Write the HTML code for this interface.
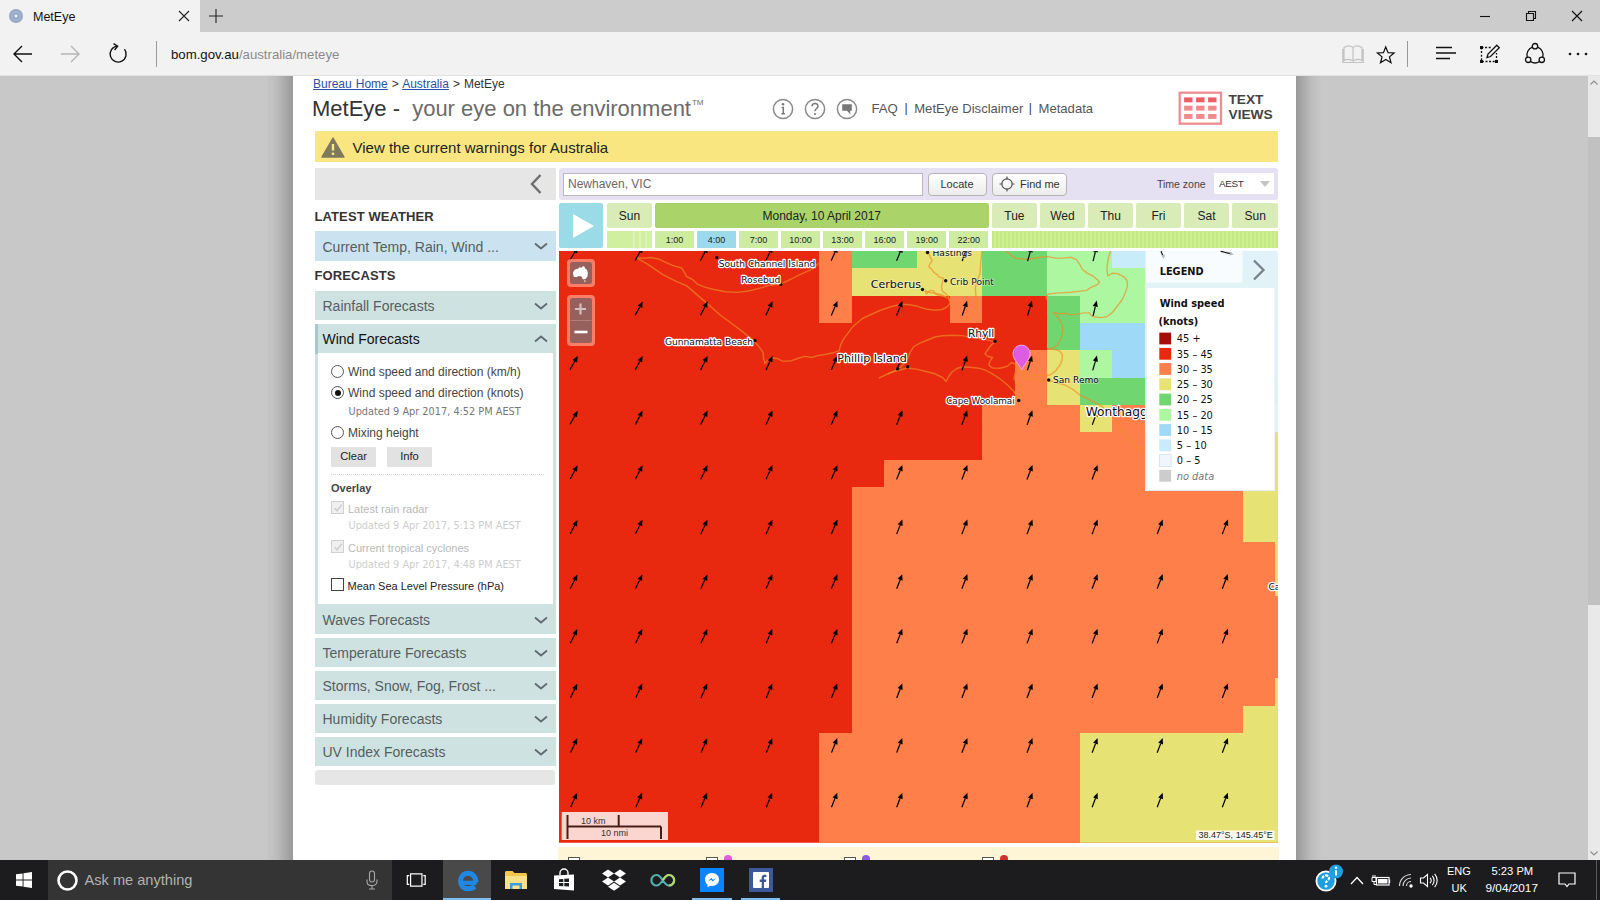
<!DOCTYPE html>
<html lang="en"><head><meta charset="utf-8"><title>MetEye</title>
<style>
*{box-sizing:border-box;margin:0;padding:0}
html,body{width:1600px;height:900px;overflow:hidden}
body{position:relative;background:#c8c8c8;font-family:"Liberation Sans",Arial,sans-serif;color:#333}
.abs{position:absolute}
.t{position:absolute;white-space:nowrap;line-height:1}
svg{position:absolute;overflow:visible}
a{color:#2a4fa5}
/* browser chrome */
#tabstrip{left:0;top:0;width:1600px;height:32px;background:#cccccc}
#tab{left:0;top:0;width:200px;height:32px;background:#f2f2f2}
#toolbar{left:0;top:32px;width:1600px;height:44px;background:#f2f2f2}
#tbline{left:0;top:75px;width:1600px;height:1px;background:#e1e1e1}
/* page */
#shadowL{left:265px;top:76px;width:28px;height:784px;background:linear-gradient(to right,#c8c8c8,#bdbdbd 40%,#999)}
#shadowR{left:1296px;top:76px;width:26px;height:784px;background:linear-gradient(to left,#c8c8c8,#bdbdbd 40%,#999)}
#col{left:293px;top:76px;width:1003px;height:784px;background:#fff}
#sbar{left:1588px;top:76px;width:12px;height:784px;background:#e9e9e9}
#sthumb{left:1588px;top:137px;width:12px;height:468px;background:#c1c1c1}
.bar{position:absolute;left:315px;width:240.5px;height:29px;background:#cfe2e2;font-size:14px;color:#555e60}
.bar span{position:absolute;left:7.5px;top:8.7px;line-height:1;white-space:nowrap}
.rad{position:absolute;width:13px;height:13px;border-radius:50%;border:1px solid #555;background:#fff}
.lbl{position:absolute;white-space:nowrap;line-height:1;font-size:12px;color:#444}
.upd{position:absolute;white-space:nowrap;line-height:1;font-family:"DejaVu Sans",Verdana,sans-serif;font-size:9.75px;color:#777}
.btn{position:absolute;height:20px;background:#e2e2e2;font-size:11.2px;color:#222;text-align:center;line-height:19px}
.cb{position:absolute;width:13px;height:13px;border:1px solid #444;background:#fff}
.day{position:absolute;top:203px;height:24.5px;background:#d9ecb8;font-size:12px;color:#222;text-align:center;line-height:26.6px;border-radius:2px}
.hr{position:absolute;top:231px;height:16.5px;background:#cdeca0;font-size:9px;color:#222;text-align:center;line-height:19px}
.gbtn{position:absolute;top:172.5px;height:23px;border:1px solid #b4b4b4;border-radius:4px;background:linear-gradient(#fff,#ececec);font-size:11px;color:#333;line-height:21px}
/* taskbar */
#task{left:0;top:860px;width:1600px;height:40px;background:#1c1c1e}
#search{left:48px;top:860px;width:344px;height:40px;background:#343434}
.tk{position:absolute;color:#fff;white-space:nowrap;line-height:1;font-size:12px}
</style></head><body>

<div class="abs" id="tabstrip"></div><div class="abs" id="tab"></div><div class="abs" id="toolbar"></div><div class="abs" id="tbline"></div>
<svg style="left:8px;top:8px" width="16" height="16" viewBox="0 0 16 16"><circle cx="8" cy="8" r="7" fill="#97a7c6"/><circle cx="8" cy="8" r="4.2" fill="none" stroke="#a9b6d0" stroke-width="1.4"/><circle cx="8" cy="8" r="1.4" fill="#f4f7fc"/></svg>
<div class="t" style="left:33px;top:10.8px;font-size:12.5px;color:#111">MetEye</div>
<svg style="left:178px;top:10px" width="12" height="12" viewBox="0 0 12 12"><path d="M1 1L11 11M11 1L1 11" stroke="#222" stroke-width="1.1" fill="none"/></svg>
<svg style="left:209px;top:9px" width="14" height="14" viewBox="0 0 14 14"><path d="M7 0V14M0 7H14" stroke="#222" stroke-width="1.1" fill="none"/></svg>
<svg style="left:1479px;top:10px" width="12" height="12" viewBox="0 0 12 12"><path d="M1 6.5H11" stroke="#111" stroke-width="1.1"/></svg>
<svg style="left:1525px;top:10px" width="12" height="12" viewBox="0 0 12 12"><path d="M1.5 3.5H8.5V10.5H1.5Z M3.5 3.5V1.5H10.5V8.5H8.5" stroke="#111" stroke-width="1.1" fill="none"/></svg>
<svg style="left:1571px;top:10px" width="12" height="12" viewBox="0 0 12 12"><path d="M1 1L11 11M11 1L1 11" stroke="#111" stroke-width="1.2" fill="none"/></svg>
<svg style="left:13px;top:45px" width="20" height="18" viewBox="0 0 20 18"><path d="M19 9H1.5M9 1L1 9L9 17" stroke="#111" stroke-width="1.4" fill="none"/></svg>
<svg style="left:60px;top:45px" width="20" height="18" viewBox="0 0 20 18"><path d="M1 9H18.5M11 1L19 9L11 17" stroke="#b5b5b5" stroke-width="1.4" fill="none"/></svg>
<svg style="left:108px;top:43.3px" width="20" height="20" viewBox="0 0 20 20"><path d="M9.2 3.1A8 8 0 1 0 16.5 6.2" stroke="#111" stroke-width="1.4" fill="none"/><path d="M5.5 0.6L9.6 3.2L6.6 7" stroke="#111" stroke-width="1.4" fill="none"/></svg>
<div class="abs" style="left:156px;top:41px;width:1px;height:26px;background:#9a9a9a"></div>
<div class="t" style="left:171px;top:48px;font-size:13.2px;color:#111">bom.gov.au<span style="color:#8a8a8a">/australia/meteye</span></div>
<svg style="left:1342px;top:44px" width="22" height="20" viewBox="0 0 22 20"><path d="M2 3.5C5 1.5 8.5 1.5 11 3.5C13.5 1.5 17 1.5 20 3.5V16.5C17 15 13.5 15 11 17C8.5 15 5 15 2 16.5Z M11 3.5V17 M0.8 5V18.5H21.2V5" stroke="#c2c2c2" stroke-width="1.2" fill="none"/></svg>
<svg style="left:1375.5px;top:44.5px" width="19.5" height="19.5" viewBox="0 0 22 22"><path d="M11 2.2L13.6 8.6L20.4 9L15.2 13.4L16.9 20L11 16.3L5.1 20L6.8 13.4L1.6 9L8.4 8.6Z" stroke="#111" stroke-width="1.4" fill="none" stroke-linejoin="miter"/></svg>
<div class="abs" style="left:1407px;top:41px;width:1px;height:26px;background:#9a9a9a"></div>
<svg style="left:1435px;top:46px" width="22" height="14" viewBox="0 0 22 14"><path d="M1 1.5H17M1 7H21M1 12.5H15" stroke="#111" stroke-width="1.4"/></svg>
<svg style="left:1479px;top:43px" width="22" height="22" viewBox="0 0 22 22"><path d="M2.5 4.5H12.5M2.5 4.5V18.5H17.5V10" stroke="#111" stroke-width="1.3" fill="none" stroke-dasharray="2 1.6"/><rect x="1" y="3" width="3" height="3" fill="#111"/><rect x="1" y="17" width="3" height="3" fill="#111"/><rect x="16" y="17" width="3" height="3" fill="#111"/><path d="M8 14.5L9 11L17.8 2.2L20.3 4.7L11.5 13.5Z" stroke="#111" stroke-width="1.3" fill="#f2f2f2"/></svg>
<svg style="left:1523px;top:42px" width="24" height="24" viewBox="0 0 24 24"><path d="M9.3 5.2A8.3 8.3 0 0 0 4.2 15.2M7.6 19.6A8.3 8.3 0 0 0 16.4 19.6M19.8 15.2A8.3 8.3 0 0 0 14.7 5.2" stroke="#111" stroke-width="1.3" fill="none"/><circle cx="12" cy="4.2" r="2.7" stroke="#111" stroke-width="1.3" fill="none"/><circle cx="5.2" cy="17.8" r="2.7" stroke="#111" stroke-width="1.3" fill="none"/><circle cx="18.8" cy="17.8" r="2.7" stroke="#111" stroke-width="1.3" fill="none"/></svg>
<svg style="left:1568px;top:52px" width="20" height="4" viewBox="0 0 20 4"><circle cx="2" cy="2" r="1.3" fill="#111"/><circle cx="10" cy="2" r="1.3" fill="#111"/><circle cx="18" cy="2" r="1.3" fill="#111"/></svg>
<div class="abs" id="shadowL"></div><div class="abs" id="shadowR"></div><div class="abs" id="col"></div>
<div class="abs" id="sbar"></div><div class="abs" id="sthumb"></div>
<svg style="left:1590px;top:80px" width="8" height="5" viewBox="0 0 8 5"><path d="M0.5 4.5L4 1L7.5 4.5" stroke="#8a8a8a" stroke-width="1.1" fill="none"/></svg>
<svg style="left:1590px;top:851px" width="8" height="5" viewBox="0 0 8 5"><path d="M0.5 0.5L4 4L7.5 0.5" stroke="#8a8a8a" stroke-width="1.1" fill="none"/></svg>
<div class="t" style="left:313px;top:77.5px;font-size:12px;color:#333;word-spacing:.7px"><a href="#">Bureau Home</a> &gt; <a href="#">Australia</a> &gt; MetEye</div>
<div class="t" style="left:312px;top:98.3px;font-size:22px;color:#333">MetEye - <span style="color:#6b6b6b;margin-left:6px">your eye on the environment</span><span style="font-size:8px;color:#6b6b6b;position:relative;top:-11px;margin-left:1px">TM</span></div>
<svg style="left:771.6px;top:97.7px" width="22" height="22" viewBox="0 0 22 22"><circle cx="11" cy="11" r="9.6" fill="#fff" stroke="#8a8a8a" stroke-width="1.5"/>
<circle cx="11" cy="6.3" r="1.25" fill="#777"/><path d="M9.6 9.4H11.3V15.6M9.5 15.8H13" stroke="#777" stroke-width="1.5" fill="none"/>
</svg>
<svg style="left:803.7px;top:97.7px" width="22" height="22" viewBox="0 0 22 22"><circle cx="11" cy="11" r="9.6" fill="#fff" stroke="#8a8a8a" stroke-width="1.5"/>
<path d="M8 8.3C8 4.6 14 4.6 14 8.2C14 10.4 11 10.6 11 13.2" stroke="#777" stroke-width="1.5" fill="none"/><circle cx="11" cy="16" r="1.1" fill="#777"/>
</svg>
<svg style="left:835.7px;top:97.7px" width="22" height="22" viewBox="0 0 22 22"><circle cx="11" cy="11" r="9.6" fill="#fff" stroke="#8a8a8a" stroke-width="1.5"/>
<path d="M6.2 6.3H15.8V12.7H14.2V16.2L11 12.7H6.2Z" fill="#777"/>
</svg>
<div class="t" style="left:871.5px;top:102px;font-size:13.2px;color:#555">FAQ</div>
<div class="t" style="left:904.5px;top:101.5px;font-size:12px;color:#333">|</div>
<div class="t" style="left:914.2px;top:102px;font-size:13.1px;color:#555">MetEye Disclaimer</div>
<div class="t" style="left:1028.8px;top:101.5px;font-size:12px;color:#333">|</div>
<div class="t" style="left:1038.5px;top:102px;font-size:13.1px;color:#555">Metadata</div>
<svg style="left:1178px;top:90.7px" width="45" height="34" viewBox="0 0 45 34"><rect x="1.7" y="1.7" width="41.3" height="31" fill="#fff" stroke="#ee8d92" stroke-width="2.3"/>
<rect x="6.1" y="6.4" width="8.4" height="4.9" fill="#ea5f62"/>
<rect x="18.1" y="6.4" width="8.4" height="4.9" fill="#ea5f62"/>
<rect x="30.1" y="6.4" width="8.4" height="4.9" fill="#ea5f62"/>
<rect x="6.1" y="14.700000000000001" width="8.4" height="4.9" fill="#ef8b8b"/>
<rect x="18.1" y="14.700000000000001" width="8.4" height="4.9" fill="#ef8b8b"/>
<rect x="30.1" y="14.700000000000001" width="8.4" height="4.9" fill="#ef8b8b"/>
<rect x="6.1" y="23.0" width="8.4" height="4.9" fill="#ef8b8b"/>
<rect x="18.1" y="23.0" width="8.4" height="4.9" fill="#ef8b8b"/>
<rect x="30.1" y="23.0" width="8.4" height="4.9" fill="#ef8b8b"/>
</svg>
<div class="t" style="left:1228.5px;top:92.5px;font-size:13.7px;font-weight:700;color:#444">TEXT</div>
<div class="t" style="left:1228.5px;top:108px;font-size:13.7px;font-weight:700;color:#444">VIEWS</div>
<div class="abs" style="left:315px;top:131.2px;width:963px;height:31px;background:#fae680"></div>
<svg style="left:320.5px;top:136.5px" width="24" height="21" viewBox="0 0 24 21"><path d="M12 1L23 20H1Z" fill="#7d7a5c" stroke="#7d7a5c" stroke-width="1.4" stroke-linejoin="round"/><path d="M12 7V13.5" stroke="#fbe680" stroke-width="2.4"/><circle cx="12" cy="16.8" r="1.4" fill="#fbe680"/></svg>
<div class="t" style="left:352.5px;top:140px;font-size:15px;color:#222">View the current warnings for Australia</div>
<div class="abs" style="left:315px;top:168px;width:240.5px;height:31.5px;background:#e6e6e6"></div>
<svg style="left:530px;top:174px" width="12" height="20" viewBox="0 0 12 20"><path d="M10.5 1L2 10L10.5 19" stroke="#6e6e6e" stroke-width="2.4" fill="none"/></svg>
<div class="t" style="left:314.5px;top:209.5px;font-size:13px;font-weight:700;color:#333;letter-spacing:.1px">LATEST WEATHER</div>
<div class="t" style="left:314.5px;top:268.5px;font-size:13px;font-weight:700;color:#333;letter-spacing:.1px">FORECASTS</div>
<div class="bar" style="top:231px;height:29.5px;background:#cbe3f0"><span>Current Temp, Rain, Wind ...</span></div>
<svg style="left:534px;top:242px" width="14" height="8" viewBox="0 0 14 8"><path d="M1 1.5L7 6.5L13 1.5" stroke="#5f6b6d" stroke-width="1.8" fill="none"/></svg>
<div class="bar" style="top:290.5px"><span>Rainfall Forecasts</span></div>
<svg style="left:534px;top:302.0px" width="14" height="8" viewBox="0 0 14 8"><path d="M1 1.5L7 6.5L13 1.5" stroke="#5f6b6d" stroke-width="1.8" fill="none"/></svg>
<div class="bar" style="top:604.5px"><span>Waves Forecasts</span></div>
<svg style="left:534px;top:616.0px" width="14" height="8" viewBox="0 0 14 8"><path d="M1 1.5L7 6.5L13 1.5" stroke="#5f6b6d" stroke-width="1.8" fill="none"/></svg>
<div class="bar" style="top:637.5px"><span>Temperature Forecasts</span></div>
<svg style="left:534px;top:649.0px" width="14" height="8" viewBox="0 0 14 8"><path d="M1 1.5L7 6.5L13 1.5" stroke="#5f6b6d" stroke-width="1.8" fill="none"/></svg>
<div class="bar" style="top:670.5px"><span>Storms, Snow, Fog, Frost ...</span></div>
<svg style="left:534px;top:682.0px" width="14" height="8" viewBox="0 0 14 8"><path d="M1 1.5L7 6.5L13 1.5" stroke="#5f6b6d" stroke-width="1.8" fill="none"/></svg>
<div class="bar" style="top:703.5px"><span>Humidity Forecasts</span></div>
<svg style="left:534px;top:715.0px" width="14" height="8" viewBox="0 0 14 8"><path d="M1 1.5L7 6.5L13 1.5" stroke="#5f6b6d" stroke-width="1.8" fill="none"/></svg>
<div class="bar" style="top:736.5px"><span>UV Index Forecasts</span></div>
<svg style="left:534px;top:748.0px" width="14" height="8" viewBox="0 0 14 8"><path d="M1 1.5L7 6.5L13 1.5" stroke="#5f6b6d" stroke-width="1.8" fill="none"/></svg>
<div class="abs" style="left:315px;top:323.5px;width:240.5px;height:281px;background:#cfe2e2"></div>
<div class="abs" style="left:315px;top:323.5px;width:3px;height:30px;background:#a9c9c9"></div>
<div class="abs" style="left:318px;top:353px;width:234.5px;height:251px;background:#fff"></div>
<div class="t" style="left:322.5px;top:332.2px;font-size:14px;color:#111">Wind Forecasts</div>
<svg style="left:534px;top:334.5px" width="14" height="8" viewBox="0 0 14 8"><path d="M1 6.5L7 1.5L13 6.5" stroke="#5f6b6d" stroke-width="1.8" fill="none"/></svg>
<div class="rad" style="left:331px;top:365.3px"></div>
<div class="lbl" style="left:348px;top:366.3px">Wind speed and direction (km/h)</div>
<div class="rad" style="left:331px;top:386.0px"><div class="abs" style="left:2.5px;top:2.5px;width:6px;height:6px;border-radius:50%;background:#111"></div></div>
<div class="lbl" style="left:348px;top:387.0px">Wind speed and direction (knots)</div>
<div class="rad" style="left:331px;top:425.5px"></div>
<div class="lbl" style="left:348px;top:426.5px">Mixing height</div>
<div class="upd" style="left:348.5px;top:407px">Updated 9 Apr 2017, 4:52 PM AEST</div>
<div class="btn" style="left:331px;top:446.8px;width:45px">Clear</div>
<div class="btn" style="left:387px;top:446.8px;width:45px">Info</div>
<div class="abs" style="left:331px;top:474px;width:213px;height:0;border-top:1px dotted #d5d5d5"></div>
<div class="t" style="left:331px;top:483px;font-size:11px;font-weight:700;color:#444">Overlay</div>
<div class="cb" style="left:331px;top:501px;border-color:#d0d0d0;background:#f0f0f0"><svg style="left:1px;top:1px" width="10" height="10" viewBox="0 0 10 10"><path d="M1.5 5.2L4 7.8L8.8 1.8" stroke="#cfcfcf" stroke-width="1.6" fill="none"/></svg></div>
<div class="lbl" style="left:348px;top:504px;font-size:11px;color:#b8b8b8">Latest rain radar</div>
<div class="upd" style="left:348.5px;top:521.2px;color:#cdcdcd">Updated 9 Apr 2017, 5:13 PM AEST</div>
<div class="cb" style="left:331px;top:540.2px;border-color:#d0d0d0;background:#f0f0f0"><svg style="left:1px;top:1px" width="10" height="10" viewBox="0 0 10 10"><path d="M1.5 5.2L4 7.8L8.8 1.8" stroke="#cfcfcf" stroke-width="1.6" fill="none"/></svg></div>
<div class="lbl" style="left:348px;top:543px;font-size:11px;color:#b8b8b8">Current tropical cyclones</div>
<div class="upd" style="left:348.5px;top:560px;color:#cdcdcd">Updated 9 Apr 2017, 4:48 PM AEST</div>
<div class="cb" style="left:331px;top:578px"></div>
<div class="lbl" style="left:347.5px;top:580.5px;font-size:11px;color:#222">Mean Sea Level Pressure (hPa)</div>
<div class="abs" style="left:315px;top:769.5px;width:240px;height:15px;background:#e6e6e6;border-radius:3px"></div>
<div class="abs" style="left:559px;top:168px;width:718.5px;height:31.5px;background:#e6e1f2;border-radius:3px"></div>
<div class="abs" style="left:563px;top:172.5px;width:359.5px;height:23px;background:#fff;border:1px solid #b9b9b9"></div>
<div class="t" style="left:568px;top:178px;font-size:12px;color:#686868">Newhaven, VIC</div>
<div class="gbtn" style="left:927.5px;width:59px;text-align:center">Locate</div>
<div class="gbtn" style="left:991.5px;width:75px;padding-left:27.5px">Find me</div>
<svg style="left:998.5px;top:176px" width="16" height="16" viewBox="0 0 16 16"><circle cx="8" cy="8" r="5.2" stroke="#555" stroke-width="1.2" fill="none"/><path d="M8 0.5V3.5M8 12.5V15.5M0.5 8H3.5M12.5 8H15.5" stroke="#555" stroke-width="1.2"/></svg>
<div class="t" style="left:1157px;top:179px;font-size:10.5px;color:#444">Time zone</div>
<div class="abs" style="left:1214px;top:173.3px;width:60px;height:21.2px;background:#fff"></div>
<div class="t" style="left:1219px;top:179.3px;font-size:9.9px;letter-spacing:-.3px;color:#333">AEST</div>
<svg style="left:1260px;top:181px" width="10" height="6" viewBox="0 0 10 6"><path d="M0 0H10L5 6Z" fill="#c4c4c4"/></svg>
<div class="abs" style="left:559px;top:203px;width:44px;height:44.5px;background:#9bdbe8;border-radius:2px"></div>
<svg style="left:572.5px;top:213.5px" width="21" height="24" viewBox="0 0 21 24"><path d="M0 0L21 12L0 24Z" fill="#fff"/></svg>
<div class="day" style="left:607px;width:44.8px">Sun</div>
<div class="day" style="left:655px;width:333.5px;background:#aad46a">Monday, 10 April 2017</div>
<div class="day" style="left:992.0px;width:44.8px">Tue</div>
<div class="day" style="left:1040.05px;width:44.8px">Wed</div>
<div class="day" style="left:1088.1px;width:44.8px">Thu</div>
<div class="day" style="left:1136.15px;width:44.8px">Fri</div>
<div class="day" style="left:1184.2px;width:44.8px">Sat</div>
<div class="day" style="left:1232.25px;width:45.8px">Sun</div>
<div class="hr" style="left:607px;width:44.8px;background:linear-gradient(to right,#d0ef9f 0,#d0ef9f 26px,#dcf3b8 26px,#dcf3b8 28px,#d0ef9f 28px,#d0ef9f 32px,#dcf3b8 32px,#dcf3b8 34px,#d0ef9f 34px,#d0ef9f 38px,#dcf3b8 38px,#dcf3b8 40px,#d0ef9f 40px)"></div>
<div class="hr" style="left:655.0px;width:38.8px">1:00</div>
<div class="hr" style="left:697.05px;width:38.8px;background:#9bd9ec">4:00</div>
<div class="hr" style="left:739.1px;width:38.8px">7:00</div>
<div class="hr" style="left:781.15px;width:38.8px">10:00</div>
<div class="hr" style="left:823.2px;width:38.8px">13:00</div>
<div class="hr" style="left:865.25px;width:38.8px">16:00</div>
<div class="hr" style="left:907.3px;width:38.8px">19:00</div>
<div class="hr" style="left:949.3499999999999px;width:38.8px">22:00</div>
<div class="hr" style="left:992px;width:285.5px;background:repeating-linear-gradient(to right,#c5e985 0,#c5e985 2px,#ceee93 2px,#ceee93 4px)"></div>
<svg id="map" style="left:0;top:0" width="1600" height="900" viewBox="0 0 1600 900">
<defs><clipPath id="mc"><rect x="559.0" y="251.0" width="719.0" height="591.7"/></clipPath></defs>
<g clip-path="url(#mc)" shape-rendering="crispEdges">
<rect x="559.0" y="251.0" width="719.0" height="591.7" fill="#e8290f"/>
<rect x="819.28" y="241.11" width="32.86" height="27.62" fill="#ff7f4a"/>
<rect x="851.84" y="241.11" width="65.42" height="27.62" fill="#70d670"/>
<rect x="916.96" y="241.11" width="65.42" height="27.62" fill="#e6e273"/>
<rect x="982.08" y="241.11" width="65.42" height="27.62" fill="#70d670"/>
<rect x="1047.20" y="241.11" width="65.42" height="27.62" fill="#adf7a1"/>
<rect x="1112.32" y="241.11" width="195.66" height="27.62" fill="#c9ecfb"/>
<rect x="819.28" y="268.43" width="32.86" height="27.62" fill="#ff7f4a"/>
<rect x="851.84" y="268.43" width="130.54" height="27.62" fill="#e6e273"/>
<rect x="982.08" y="268.43" width="65.42" height="27.62" fill="#70d670"/>
<rect x="1047.20" y="268.43" width="260.78" height="27.62" fill="#adf7a1"/>
<rect x="819.28" y="295.75" width="32.86" height="27.62" fill="#ff7f4a"/>
<rect x="949.52" y="295.75" width="32.86" height="27.62" fill="#ff7f4a"/>
<rect x="1047.20" y="295.75" width="32.86" height="27.62" fill="#70d670"/>
<rect x="1079.76" y="295.75" width="228.22" height="27.62" fill="#adf7a1"/>
<rect x="1047.20" y="323.07" width="32.86" height="27.62" fill="#70d670"/>
<rect x="1079.76" y="323.07" width="228.22" height="27.62" fill="#9ed9f7"/>
<rect x="1014.64" y="350.39" width="32.86" height="27.62" fill="#ff7f4a"/>
<rect x="1047.20" y="350.39" width="32.86" height="27.62" fill="#e6e273"/>
<rect x="1079.76" y="350.39" width="32.86" height="27.62" fill="#adf7a1"/>
<rect x="1112.32" y="350.39" width="195.66" height="27.62" fill="#9ed9f7"/>
<rect x="1014.64" y="377.71" width="32.86" height="27.62" fill="#ff7f4a"/>
<rect x="1047.20" y="377.71" width="32.86" height="27.62" fill="#e6e273"/>
<rect x="1079.76" y="377.71" width="228.22" height="27.62" fill="#70d670"/>
<rect x="982.08" y="405.03" width="97.98" height="27.62" fill="#ff7f4a"/>
<rect x="1079.76" y="405.03" width="32.86" height="27.62" fill="#e6e273"/>
<rect x="1112.32" y="405.03" width="32.86" height="27.62" fill="#ff7f4a"/>
<rect x="1144.88" y="405.03" width="163.10" height="27.62" fill="#c9ecfb"/>
<rect x="982.08" y="432.35" width="293.34" height="27.62" fill="#ff7f4a"/>
<rect x="1275.12" y="432.35" width="32.86" height="27.62" fill="#e6e273"/>
<rect x="884.40" y="459.67" width="391.02" height="27.62" fill="#ff7f4a"/>
<rect x="1275.12" y="459.67" width="32.86" height="27.62" fill="#e6e273"/>
<rect x="851.84" y="486.99" width="391.02" height="27.62" fill="#ff7f4a"/>
<rect x="1242.56" y="486.99" width="65.42" height="27.62" fill="#e6e273"/>
<rect x="851.84" y="514.31" width="391.02" height="27.62" fill="#ff7f4a"/>
<rect x="1242.56" y="514.31" width="65.42" height="27.62" fill="#e6e273"/>
<rect x="851.84" y="541.63" width="423.58" height="27.62" fill="#ff7f4a"/>
<rect x="1275.12" y="541.63" width="32.86" height="27.62" fill="#e6e273"/>
<rect x="851.84" y="568.95" width="423.58" height="27.62" fill="#ff7f4a"/>
<rect x="1275.12" y="568.95" width="32.86" height="27.62" fill="#e6e273"/>
<rect x="851.84" y="596.27" width="456.14" height="27.62" fill="#ff7f4a"/>
<rect x="851.84" y="623.59" width="456.14" height="27.62" fill="#ff7f4a"/>
<rect x="851.84" y="650.91" width="456.14" height="27.62" fill="#ff7f4a"/>
<rect x="851.84" y="678.23" width="423.58" height="27.62" fill="#ff7f4a"/>
<rect x="1275.12" y="678.23" width="32.86" height="27.62" fill="#e6e273"/>
<rect x="851.84" y="705.55" width="391.02" height="27.62" fill="#ff7f4a"/>
<rect x="1242.56" y="705.55" width="65.42" height="27.62" fill="#e6e273"/>
<rect x="819.28" y="732.87" width="260.78" height="27.62" fill="#ff7f4a"/>
<rect x="1079.76" y="732.87" width="228.22" height="27.62" fill="#e6e273"/>
<rect x="819.28" y="760.19" width="260.78" height="27.62" fill="#ff7f4a"/>
<rect x="1079.76" y="760.19" width="228.22" height="27.62" fill="#e6e273"/>
<rect x="819.28" y="787.51" width="260.78" height="27.62" fill="#ff7f4a"/>
<rect x="1079.76" y="787.51" width="228.22" height="27.62" fill="#e6e273"/>
<rect x="819.28" y="814.83" width="260.78" height="28.82" fill="#ff7f4a"/>
<rect x="1079.76" y="814.83" width="228.22" height="28.82" fill="#e6e273"/>
</g>
<g clip-path="url(#mc)" fill="none" stroke="#ee8c28" stroke-opacity=".66" stroke-width="1.4" stroke-linejoin="round">
<path d="M636.5 257.9 L643.7 258.3 L650.9 257.5 L659.5 259.3 L666.7 262.9 L673.9 265.8 L681.8 268.0 L683.9 271.6 L686.8 276.6 L692.6 279.5 L696.9 283.8 L705.5 287.4 L714.1 289.5 L725.6 291.7 L737.1 292.4 L748.6 291.0 L760.1 288.1 L770.2 285.2 L781.0 283.8 L790.3 279.5 L800.4 274.4 L810.4 270.1 L817.6 264.4 L824.1 258.6 L829.8 250.7"/>
<path d="M636.5 257.9 L648.0 264.4 L662.4 274.4 L676.7 281.6 L686.8 285.9 L696.9 294.6 L708.4 304.6 L719.9 314.7 L731.4 323.3 L742.9 331.9 L751.5 339.1 L758.7 346.3 L763.0 352.1 L763.7 359.2 L765.1 363.6 L767.3 360.7 L771.6 357.8 L777.4 358.5 L783.1 361.4 L791.7 360.7 L797.5 358.5 L804.7 356.4 L811.9 357.5 L817.6 355.6 L826.2 354.2 L833.4 352.8 L839.2 350.6 L840.6 344.9 L843.5 339.1 L847.8 333.4 L852.1 327.6 L855.0 324.7 L862.5 318.5 L871 314.5 L880 310.5 L890 307 L900 304.5 L908 304.5 L917.5 306.3 L926 309 L935 310.3 L942 309.5 L947 307 L950.5 302.5 L948 298 L942.5 295 L936 293.5 L930 292.5 L925 291"/>
<path d="M928 251 L928.9 253.7 L930.3 257.5 L932.2 260.3 L929.8 264.1 L928.9 266.9 L931.2 268.7 L934 272.5 L936.9 274.4 L939.7 277.2 L943.4 278.1 L942.5 281.9 L941.5 287.5 L942.5 291.2 L946.2 294.1 L948.1 295.9 L950.5 302.5"/>
<path d="M925 291 L926.5 294.1 L928.4 291.7 L931.2 290.3 L934 291.2 L935 293.6 L937.8 295 L941.5 295.9 L946 297"/>
<path d="M982 251 L981.8 252.8 L980.9 261.2 L980 273.4 L977.2 280.9 L975.3 287.5 L975.8 294.1 L976.2 299.7 L977.5 306 L975 312.5 L971 317 L967 321"/>
<path d="M1006 251 L1008.7 253 L1013 257 L1017.5 258.7 L1028 259.3 L1040 257.3 L1047.8 256.6 L1055.6 258.1 L1063.3 258.1 L1071.1 257.3 L1076.5 259.7 L1079.7 264.3 L1082 269 L1086.7 272.9 L1092.9 276 L1097.5 279.9 L1099.5 282.2 L1097.5 284.5 L1090.5 287.7 L1086.7 290.4 L1071.1 292.3 L1055.6 293.1 L1047.8 294.3 L1046 297 L1047 300"/>
<path d="M1110.4 251 L1107.7 261.2 L1106.9 269 L1107.7 276 L1112.3 273.3 L1117.8 273.7 L1124 276.8 L1127.1 280.7 L1127.5 286.1 L1125.5 292.3 L1122.4 299.3 L1117.8 305.5 L1112.3 312.5 L1106.9 316.8 L1100.7 317.6 L1093.7 316.8 L1090.5 314.9 L1089.8 312.9 L1083.5 312.9 L1077.3 314.1 L1071.1 314.9 L1065.7 313.300 L1059.4 313.700 L1053.2 312.5 L1057.9 317.2 L1061 321.9 L1062.6 326 L1062.5 332.5 L1061 339 L1057.5 345 L1053 348 L1047.5 348.7"/>
<path d="M878.8 378.1 L887.5 374.0 L896.2 370.2 L900.6 367.2 L906.2 361.2 L908.8 355.6 L910.0 352.5 L913.8 346.5 L920.0 343.2 L927.5 340.0 L935.0 337.0 L942.5 335.8 L952.5 335.2 L962.5 335.6 L968.8 336.9 L981.2 338.8 L990.0 340.6 L995.0 341.9 L991.2 345.0 L987.5 350.0 L985.0 353.8 L987.5 356.2 L992.5 357.5 L990.0 361.2 L988.8 365.0 L992.5 368.1 L1000.0 368.2 L1007.5 366.2 L1011.2 362.8 L1015.0 363.8 L1017.5 367.5 L1021.9 370.0"/>
<path d="M887.5 374.0 L892.5 372.2 L900.0 370.0 L907.5 368.0 L917.5 369.4 L925.0 371.2 L935.0 373.8 L942.5 377.5 L946.2 381.5 L948.8 376.2 L952.5 371.5 L957.5 368.2 L962.5 367.0 L970.0 367.2 L978.8 368.2 L985.0 370.0 L992.5 373.8 L1000.0 378.8 L1007.5 385.0 L1012.5 390.0 L1016.2 395.0 L1018.8 400.0 L1023.1 395.0 L1022.5 387.5 L1016.9 383.1 L1014.0 378.8 L1015.0 373.8 L1021.9 370.0"/>
<path d="M1021.7 370 L1025 372.5 L1030 375 L1040 375.5 L1050 375 L1055.5 371 L1060 365 L1062 360 L1062.5 355 L1060.5 352 L1057.5 350 L1052 349 L1047.5 348.7"/>
<path d="M1021.7 370 L1022.5 374 L1022 378 L1035 379.3 L1048.7 380.3 L1058 383 L1065 385 L1073 389.5 L1080 395 L1090 400 L1100 405 L1108 412 L1115 420 L1120 427.5 L1125 435 L1130 440 L1135 445 L1140 449 L1145 452.5"/>
</g>
<g clip-path="url(#mc)" stroke="#000" stroke-width="1.2" fill="#000" stroke-linecap="butt">
<path d="M569.8 260.3L574.8 252.1" fill="none"/><path d="M578.0 246.9L572.6 250.7L577.1 253.4Z" stroke="none"/>
<path d="M635.2 260.4L639.9 252.0" fill="none"/><path d="M642.9 246.8L637.6 250.8L642.2 253.3Z" stroke="none"/>
<path d="M700.5 260.5L705.0 252.0" fill="none"/><path d="M707.8 246.7L702.7 250.8L707.3 253.2Z" stroke="none"/>
<path d="M765.9 260.6L770.0 252.0" fill="none"/><path d="M772.6 246.6L767.7 250.9L772.4 253.1Z" stroke="none"/>
<path d="M831.2 260.7L835.1 252.0" fill="none"/><path d="M837.5 246.5L832.7 250.9L837.5 253.0Z" stroke="none"/>
<path d="M896.6 260.8L900.2 251.9" fill="none"/><path d="M902.4 246.4L897.8 251.0L902.6 252.9Z" stroke="none"/>
<path d="M962.2 261.0L965.2 251.9" fill="none"/><path d="M967.1 246.2L962.7 251.1L967.7 252.7Z" stroke="none"/>
<path d="M1027.6 261.1L1030.2 251.9" fill="none"/><path d="M1031.9 246.1L1027.7 251.2L1032.7 252.6Z" stroke="none"/>
<path d="M1093.1 261.2L1095.3 251.8" fill="none"/><path d="M1096.7 246.0L1092.7 251.3L1097.8 252.4Z" stroke="none"/>
<path d="M1158.5 261.3L1160.3 251.8" fill="none"/><path d="M1161.4 245.9L1157.8 251.3L1162.9 252.3Z" stroke="none"/>
<path d="M1224.0 261.3L1225.4 251.8" fill="none"/><path d="M1226.2 245.9L1222.8 251.4L1227.9 252.2Z" stroke="none"/>
<path d="M569.9 314.9L574.8 306.7" fill="none"/><path d="M577.9 301.5L572.6 305.4L577.1 308.0Z" stroke="none"/>
<path d="M635.2 315.1L639.9 306.7" fill="none"/><path d="M642.8 301.4L637.6 305.4L642.2 307.9Z" stroke="none"/>
<path d="M700.6 315.2L705.0 306.6" fill="none"/><path d="M707.7 301.3L702.6 305.5L707.3 307.8Z" stroke="none"/>
<path d="M765.9 315.3L770.0 306.6" fill="none"/><path d="M772.6 301.2L767.7 305.5L772.4 307.7Z" stroke="none"/>
<path d="M831.3 315.4L835.1 306.6" fill="none"/><path d="M837.5 301.1L832.7 305.6L837.5 307.6Z" stroke="none"/>
<path d="M896.6 315.5L900.2 306.6" fill="none"/><path d="M902.4 301.0L897.8 305.6L902.6 307.5Z" stroke="none"/>
<path d="M962.2 315.6L965.2 306.5" fill="none"/><path d="M967.1 300.8L962.7 305.7L967.7 307.3Z" stroke="none"/>
<path d="M1027.6 315.7L1030.2 306.5" fill="none"/><path d="M1031.9 300.7L1027.7 305.8L1032.7 307.2Z" stroke="none"/>
<path d="M1093.1 315.8L1095.3 306.5" fill="none"/><path d="M1096.7 300.6L1092.7 305.9L1097.8 307.1Z" stroke="none"/>
<path d="M1158.5 315.9L1160.3 306.5" fill="none"/><path d="M1161.4 300.6L1157.8 306.0L1162.9 307.0Z" stroke="none"/>
<path d="M1224.0 316.0L1225.4 306.5" fill="none"/><path d="M1226.2 300.5L1222.8 306.1L1227.9 306.8Z" stroke="none"/>
<path d="M570.0 369.6L574.8 361.3" fill="none"/><path d="M577.8 356.1L572.5 360.0L577.1 362.6Z" stroke="none"/>
<path d="M635.3 369.7L639.9 361.3" fill="none"/><path d="M642.7 356.0L637.6 360.1L642.2 362.5Z" stroke="none"/>
<path d="M700.6 369.9L704.9 361.3" fill="none"/><path d="M707.6 355.9L702.6 360.1L707.3 362.4Z" stroke="none"/>
<path d="M766.0 370.0L770.0 361.2" fill="none"/><path d="M772.6 355.8L767.7 360.2L772.4 362.3Z" stroke="none"/>
<path d="M831.3 370.0L835.1 361.2" fill="none"/><path d="M837.5 355.7L832.7 360.2L837.5 362.3Z" stroke="none"/>
<path d="M896.6 370.1L900.2 361.2" fill="none"/><path d="M902.4 355.6L897.7 360.2L902.6 362.2Z" stroke="none"/>
<path d="M962.0 370.2L965.2 361.2" fill="none"/><path d="M967.2 355.5L962.8 360.3L967.7 362.0Z" stroke="none"/>
<path d="M1027.4 370.3L1030.3 361.2" fill="none"/><path d="M1032.1 355.5L1027.8 360.4L1032.8 362.0Z" stroke="none"/>
<path d="M1092.7 370.4L1095.4 361.2" fill="none"/><path d="M1097.0 355.4L1092.9 360.4L1097.9 361.9Z" stroke="none"/>
<path d="M1158.0 370.4L1160.4 361.1" fill="none"/><path d="M1162.0 355.3L1157.9 360.5L1163.0 361.8Z" stroke="none"/>
<path d="M1223.3 370.5L1225.5 361.1" fill="none"/><path d="M1226.9 355.3L1223.0 360.5L1228.0 361.7Z" stroke="none"/>
<path d="M570.1 424.3L574.8 415.9" fill="none"/><path d="M577.7 410.7L572.5 414.7L577.0 417.2Z" stroke="none"/>
<path d="M635.4 424.4L639.9 415.9" fill="none"/><path d="M642.6 410.6L637.6 414.7L642.2 417.1Z" stroke="none"/>
<path d="M700.7 424.5L704.9 415.9" fill="none"/><path d="M707.6 410.5L702.6 414.8L707.3 417.1Z" stroke="none"/>
<path d="M766.0 424.6L770.0 415.9" fill="none"/><path d="M772.5 410.4L767.6 414.8L772.4 417.0Z" stroke="none"/>
<path d="M831.3 424.7L835.1 415.9" fill="none"/><path d="M837.4 410.3L832.7 414.8L837.5 416.9Z" stroke="none"/>
<path d="M896.6 424.8L900.2 415.8" fill="none"/><path d="M902.4 410.3L897.7 414.9L902.6 416.8Z" stroke="none"/>
<path d="M961.9 424.8L965.2 415.8" fill="none"/><path d="M967.3 410.2L962.8 414.9L967.7 416.7Z" stroke="none"/>
<path d="M1027.1 424.9L1030.3 415.8" fill="none"/><path d="M1032.4 410.2L1027.9 414.9L1032.8 416.7Z" stroke="none"/>
<path d="M1092.3 424.9L1095.5 415.8" fill="none"/><path d="M1097.4 410.2L1093.0 415.0L1097.9 416.7Z" stroke="none"/>
<path d="M1157.5 424.9L1160.6 415.8" fill="none"/><path d="M1162.5 410.1L1158.1 415.0L1163.0 416.7Z" stroke="none"/>
<path d="M1222.7 424.9L1225.7 415.8" fill="none"/><path d="M1227.5 410.1L1223.2 415.0L1228.1 416.6Z" stroke="none"/>
<path d="M570.2 479.0L574.8 470.6" fill="none"/><path d="M577.6 465.3L572.5 469.3L577.0 471.8Z" stroke="none"/>
<path d="M635.5 479.1L639.8 470.6" fill="none"/><path d="M642.6 465.2L637.5 469.4L642.2 471.7Z" stroke="none"/>
<path d="M700.8 479.2L704.9 470.5" fill="none"/><path d="M707.5 465.1L702.6 469.4L707.3 471.7Z" stroke="none"/>
<path d="M766.1 479.3L770.0 470.5" fill="none"/><path d="M772.5 465.1L767.6 469.4L772.4 471.6Z" stroke="none"/>
<path d="M831.3 479.3L835.1 470.5" fill="none"/><path d="M837.4 465.0L832.7 469.5L837.5 471.5Z" stroke="none"/>
<path d="M896.6 479.4L900.2 470.5" fill="none"/><path d="M902.4 464.9L897.7 469.5L902.6 471.4Z" stroke="none"/>
<path d="M961.9 479.5L965.3 470.5" fill="none"/><path d="M967.4 464.9L962.8 469.6L967.7 471.4Z" stroke="none"/>
<path d="M1027.0 479.5L1030.4 470.5" fill="none"/><path d="M1032.5 464.9L1027.9 469.6L1032.8 471.4Z" stroke="none"/>
<path d="M1092.1 479.5L1095.5 470.5" fill="none"/><path d="M1097.6 464.9L1093.1 469.6L1097.9 471.4Z" stroke="none"/>
<path d="M1157.2 479.5L1160.6 470.5" fill="none"/><path d="M1162.7 464.9L1158.2 469.6L1163.0 471.4Z" stroke="none"/>
<path d="M1222.3 479.5L1225.7 470.5" fill="none"/><path d="M1227.9 464.9L1223.3 469.6L1228.2 471.4Z" stroke="none"/>
<path d="M570.3 533.7L574.7 525.2" fill="none"/><path d="M577.5 519.9L572.4 524.0L577.0 526.4Z" stroke="none"/>
<path d="M635.5 533.8L639.8 525.2" fill="none"/><path d="M642.5 519.8L637.5 524.0L642.1 526.3Z" stroke="none"/>
<path d="M700.8 533.9L704.9 525.2" fill="none"/><path d="M707.5 519.7L702.6 524.1L707.3 526.3Z" stroke="none"/>
<path d="M766.1 533.9L770.0 525.2" fill="none"/><path d="M772.4 519.7L767.6 524.1L772.4 526.2Z" stroke="none"/>
<path d="M831.4 534.0L835.1 525.1" fill="none"/><path d="M837.4 519.6L832.7 524.1L837.5 526.1Z" stroke="none"/>
<path d="M896.6 534.1L900.2 525.1" fill="none"/><path d="M902.4 519.5L897.7 524.2L902.6 526.1Z" stroke="none"/>
<path d="M961.9 534.1L965.3 525.1" fill="none"/><path d="M967.4 519.5L962.8 524.2L967.7 526.0Z" stroke="none"/>
<path d="M1027.0 534.1L1030.4 525.1" fill="none"/><path d="M1032.5 519.5L1027.9 524.2L1032.8 526.0Z" stroke="none"/>
<path d="M1092.1 534.1L1095.5 525.1" fill="none"/><path d="M1097.6 519.5L1093.1 524.2L1097.9 526.0Z" stroke="none"/>
<path d="M1157.2 534.1L1160.6 525.1" fill="none"/><path d="M1162.7 519.5L1158.2 524.2L1163.0 526.0Z" stroke="none"/>
<path d="M1222.3 534.1L1225.7 525.1" fill="none"/><path d="M1227.9 519.5L1223.3 524.2L1228.2 526.0Z" stroke="none"/>
<path d="M570.4 588.4L574.7 579.8" fill="none"/><path d="M577.4 574.5L572.4 578.7L577.0 581.0Z" stroke="none"/>
<path d="M635.6 588.5L639.8 579.8" fill="none"/><path d="M642.4 574.4L637.5 578.7L642.1 581.0Z" stroke="none"/>
<path d="M700.9 588.5L704.9 579.8" fill="none"/><path d="M707.4 574.4L702.5 578.7L707.3 580.9Z" stroke="none"/>
<path d="M766.1 588.6L770.0 579.8" fill="none"/><path d="M772.4 574.3L767.6 578.7L772.4 580.8Z" stroke="none"/>
<path d="M831.4 588.6L835.1 579.8" fill="none"/><path d="M837.4 574.2L832.7 578.8L837.5 580.8Z" stroke="none"/>
<path d="M896.7 588.7L900.2 579.8" fill="none"/><path d="M902.3 574.2L897.7 578.8L902.6 580.7Z" stroke="none"/>
<path d="M961.9 588.7L965.3 579.8" fill="none"/><path d="M967.4 574.1L962.8 578.8L967.7 580.7Z" stroke="none"/>
<path d="M1027.0 588.7L1030.4 579.8" fill="none"/><path d="M1032.5 574.1L1027.9 578.8L1032.8 580.7Z" stroke="none"/>
<path d="M1092.1 588.7L1095.5 579.8" fill="none"/><path d="M1097.6 574.1L1093.1 578.8L1097.9 580.7Z" stroke="none"/>
<path d="M1157.2 588.7L1160.6 579.8" fill="none"/><path d="M1162.7 574.1L1158.2 578.8L1163.0 580.7Z" stroke="none"/>
<path d="M1222.3 588.7L1225.7 579.8" fill="none"/><path d="M1227.9 574.1L1223.3 578.8L1228.2 580.7Z" stroke="none"/>
<path d="M570.5 643.1L574.7 634.5" fill="none"/><path d="M577.3 629.1L572.4 633.3L577.0 635.6Z" stroke="none"/>
<path d="M635.7 643.1L639.8 634.5" fill="none"/><path d="M642.3 629.0L637.4 633.3L642.1 635.6Z" stroke="none"/>
<path d="M700.9 643.2L704.9 634.4" fill="none"/><path d="M707.3 629.0L702.5 633.4L707.3 635.5Z" stroke="none"/>
<path d="M766.2 643.2L770.0 634.4" fill="none"/><path d="M772.3 628.9L767.6 633.4L772.4 635.5Z" stroke="none"/>
<path d="M831.4 643.3L835.1 634.4" fill="none"/><path d="M837.3 628.9L832.7 633.4L837.5 635.4Z" stroke="none"/>
<path d="M896.7 643.3L900.2 634.4" fill="none"/><path d="M902.3 628.8L897.7 633.5L902.6 635.3Z" stroke="none"/>
<path d="M961.9 643.4L965.3 634.4" fill="none"/><path d="M967.4 628.8L962.8 633.5L967.7 635.3Z" stroke="none"/>
<path d="M1027.0 643.4L1030.4 634.4" fill="none"/><path d="M1032.5 628.8L1027.9 633.5L1032.8 635.3Z" stroke="none"/>
<path d="M1092.1 643.4L1095.5 634.4" fill="none"/><path d="M1097.6 628.8L1093.1 633.5L1097.9 635.3Z" stroke="none"/>
<path d="M1157.2 643.4L1160.6 634.4" fill="none"/><path d="M1162.7 628.8L1158.2 633.5L1163.0 635.3Z" stroke="none"/>
<path d="M1222.3 643.4L1225.7 634.4" fill="none"/><path d="M1227.9 628.8L1223.3 633.5L1228.2 635.3Z" stroke="none"/>
<path d="M570.5 697.8L574.7 689.1" fill="none"/><path d="M577.3 683.7L572.3 688.0L577.0 690.2Z" stroke="none"/>
<path d="M635.8 697.8L639.8 689.1" fill="none"/><path d="M642.3 683.6L637.4 688.0L642.1 690.2Z" stroke="none"/>
<path d="M701.0 697.9L704.9 689.1" fill="none"/><path d="M707.3 683.6L702.5 688.0L707.2 690.1Z" stroke="none"/>
<path d="M766.2 697.9L770.0 689.1" fill="none"/><path d="M772.3 683.5L767.6 688.0L772.4 690.1Z" stroke="none"/>
<path d="M831.4 697.9L835.1 689.1" fill="none"/><path d="M837.3 683.5L832.6 688.1L837.5 690.0Z" stroke="none"/>
<path d="M896.7 698.0L900.2 689.0" fill="none"/><path d="M902.3 683.4L897.7 688.1L902.6 690.0Z" stroke="none"/>
<path d="M961.9 698.0L965.3 689.0" fill="none"/><path d="M967.4 683.4L962.8 688.1L967.7 690.0Z" stroke="none"/>
<path d="M1027.0 698.0L1030.4 689.0" fill="none"/><path d="M1032.5 683.4L1027.9 688.1L1032.8 690.0Z" stroke="none"/>
<path d="M1092.1 698.0L1095.5 689.0" fill="none"/><path d="M1097.6 683.4L1093.1 688.1L1097.9 690.0Z" stroke="none"/>
<path d="M1157.2 698.0L1160.6 689.0" fill="none"/><path d="M1162.7 683.4L1158.2 688.1L1163.0 690.0Z" stroke="none"/>
<path d="M1222.3 698.0L1225.7 689.0" fill="none"/><path d="M1227.9 683.4L1223.3 688.1L1228.2 690.0Z" stroke="none"/>
<path d="M570.6 752.4L574.7 743.7" fill="none"/><path d="M577.2 738.3L572.3 742.6L577.0 744.8Z" stroke="none"/>
<path d="M635.8 752.5L639.8 743.7" fill="none"/><path d="M642.2 738.2L637.4 742.7L642.1 744.8Z" stroke="none"/>
<path d="M701.1 752.5L704.9 743.7" fill="none"/><path d="M707.2 738.2L702.5 742.7L707.2 744.7Z" stroke="none"/>
<path d="M766.3 752.6L770.0 743.7" fill="none"/><path d="M772.3 738.2L767.6 742.7L772.4 744.7Z" stroke="none"/>
<path d="M831.5 752.6L835.1 743.7" fill="none"/><path d="M837.3 738.1L832.6 742.7L837.5 744.7Z" stroke="none"/>
<path d="M896.7 752.6L900.1 743.7" fill="none"/><path d="M902.3 738.1L897.7 742.7L902.6 744.6Z" stroke="none"/>
<path d="M961.9 752.7L965.3 743.7" fill="none"/><path d="M967.4 738.1L962.8 742.8L967.7 744.6Z" stroke="none"/>
<path d="M1027.0 752.7L1030.4 743.7" fill="none"/><path d="M1032.5 738.1L1027.9 742.8L1032.8 744.6Z" stroke="none"/>
<path d="M1092.1 752.7L1095.5 743.7" fill="none"/><path d="M1097.6 738.1L1093.1 742.8L1097.9 744.6Z" stroke="none"/>
<path d="M1157.2 752.7L1160.6 743.7" fill="none"/><path d="M1162.7 738.1L1158.2 742.8L1163.0 744.6Z" stroke="none"/>
<path d="M1222.3 752.7L1225.7 743.7" fill="none"/><path d="M1227.9 738.1L1223.3 742.8L1228.2 744.6Z" stroke="none"/>
<path d="M570.7 807.1L574.6 798.4" fill="none"/><path d="M577.1 792.9L572.3 797.3L577.0 799.4Z" stroke="none"/>
<path d="M635.9 807.2L639.7 798.3" fill="none"/><path d="M642.1 792.8L637.3 797.3L642.1 799.4Z" stroke="none"/>
<path d="M701.1 807.2L704.8 798.3" fill="none"/><path d="M707.2 792.8L702.4 797.3L707.2 799.4Z" stroke="none"/>
<path d="M766.3 807.2L769.9 798.3" fill="none"/><path d="M772.2 792.8L767.5 797.3L772.3 799.3Z" stroke="none"/>
<path d="M831.5 807.2L835.0 798.3" fill="none"/><path d="M837.3 792.8L832.6 797.4L837.5 799.3Z" stroke="none"/>
<path d="M896.7 807.3L900.1 798.3" fill="none"/><path d="M902.3 792.7L897.7 797.4L902.6 799.3Z" stroke="none"/>
<path d="M961.9 807.3L965.3 798.3" fill="none"/><path d="M967.4 792.7L962.8 797.4L967.7 799.2Z" stroke="none"/>
<path d="M1027.0 807.3L1030.4 798.3" fill="none"/><path d="M1032.5 792.7L1027.9 797.4L1032.8 799.2Z" stroke="none"/>
<path d="M1092.1 807.3L1095.5 798.3" fill="none"/><path d="M1097.6 792.7L1093.1 797.4L1097.9 799.2Z" stroke="none"/>
<path d="M1157.2 807.3L1160.6 798.3" fill="none"/><path d="M1162.7 792.7L1158.2 797.4L1163.0 799.2Z" stroke="none"/>
<path d="M1222.3 807.3L1225.7 798.3" fill="none"/><path d="M1227.9 792.7L1223.3 797.4L1228.2 799.2Z" stroke="none"/>
</g>
<g clip-path="url(#mc)">
<circle cx="716.7" cy="257.5" r="1.7" fill="#111"/>
<circle cx="780.7" cy="284.2" r="1.7" fill="#111"/>
<circle cx="922.5" cy="289.5" r="1.7" fill="#111"/>
<circle cx="755" cy="340.5" r="1.7" fill="#111"/>
<circle cx="907.7" cy="366.7" r="1.7" fill="#111"/>
<circle cx="897.7" cy="368.7" r="1.7" fill="#111"/>
<circle cx="927.5" cy="252.5" r="1.7" fill="#111"/>
<circle cx="945.7" cy="280.7" r="1.7" fill="#111"/>
<circle cx="995" cy="341.2" r="1.7" fill="#111"/>
<circle cx="1048.7" cy="380" r="1.7" fill="#111"/>
<circle cx="1018.7" cy="400.5" r="1.7" fill="#111"/>
<text x="718.7" y="267.0" style='font-family:"DejaVu Sans", Verdana, sans-serif;font-size:9.1px' fill="#0c0c16" stroke="#fff" stroke-width="2.4" stroke-linejoin="round" paint-order="stroke" text-anchor="start">South Channel Island</text>
<text x="741.2" y="283.3" style='font-family:"DejaVu Sans", Verdana, sans-serif;font-size:9.1px' fill="#0c0c16" stroke="#fff" stroke-width="2.4" stroke-linejoin="round" paint-order="stroke" text-anchor="start">Rosebud</text>
<text x="870.7" y="288.2" style='font-family:"DejaVu Sans", Verdana, sans-serif;font-size:11.1px' fill="#0c0c16" stroke="#fff" stroke-opacity=".45" stroke-width="1.6" stroke-linejoin="round" paint-order="stroke" text-anchor="start">Cerberus</text>
<text x="665" y="345.0" style='font-family:"DejaVu Sans", Verdana, sans-serif;font-size:9.1px' fill="#0c0c16" stroke="#fff" stroke-width="2.4" stroke-linejoin="round" paint-order="stroke" text-anchor="start">Gunnamatta Beach</text>
<text x="837.2" y="361.8" style='font-family:"DejaVu Sans", Verdana, sans-serif;font-size:11.1px' fill="#0c0c16" stroke="#fff" stroke-width="2.4" stroke-linejoin="round" paint-order="stroke" text-anchor="start">Phillip Island</text>
<text x="932.5" y="255.9" style='font-family:"DejaVu Sans", Verdana, sans-serif;font-size:9.1px' fill="#0c0c16" stroke="#fff" stroke-opacity=".45" stroke-width="1.6" stroke-linejoin="round" paint-order="stroke" text-anchor="start">Hastings</text>
<text x="950" y="285.3" style='font-family:"DejaVu Sans", Verdana, sans-serif;font-size:9.1px' fill="#0c0c16" stroke="#fff" stroke-opacity=".45" stroke-width="1.6" stroke-linejoin="round" paint-order="stroke" text-anchor="start">Crib Point</text>
<text x="968" y="336.8" style='font-family:"DejaVu Sans", Verdana, sans-serif;font-size:10.6px' fill="#0c0c16" stroke="#fff" stroke-width="2.4" stroke-linejoin="round" paint-order="stroke" text-anchor="start">Rhyll</text>
<text x="1053" y="383.3" style='font-family:"DejaVu Sans", Verdana, sans-serif;font-size:9.1px' fill="#0c0c16" stroke="#fff" stroke-opacity=".45" stroke-width="1.6" stroke-linejoin="round" paint-order="stroke" text-anchor="start">San Remo</text>
<text x="946.2" y="404.4" style='font-family:"DejaVu Sans", Verdana, sans-serif;font-size:8.8px' fill="#0c0c16" stroke="#fff" stroke-width="2.4" stroke-linejoin="round" paint-order="stroke" text-anchor="start">Cape Woolamai</text>
<text x="1085.7" y="416.4" style='font-family:"DejaVu Sans", Verdana, sans-serif;font-size:12.2px' fill="#0c0c16" stroke="#fff" stroke-width="2.4" stroke-linejoin="round" paint-order="stroke" text-anchor="start">Wonthaggi</text>
<text x="1268.5" y="589.8" style='font-family:"DejaVu Sans", Verdana, sans-serif;font-size:9.1px' fill="#0c0c16" stroke="#fff" stroke-width="2.4" stroke-linejoin="round" paint-order="stroke" text-anchor="start">Ca</text>
</g>
<path d="M1021.7 370.2C1019.5 364 1013 360 1013 353.6A8.5 8.5 0 0 1 1030 353.6C1030 360 1023.8 364 1021.7 370.2Z" fill="#df5be2" stroke="#f3a6ea" stroke-width="1"/>
<rect x="567" y="259" width="28" height="28" rx="4" fill="#ff9a86" fill-opacity=".75"/><rect x="570" y="262" width="22" height="22" rx="2.5" fill="#96615c"/>
<g transform="translate(580.3 273.3) scale(.86) translate(-581.2 -272.5)"><path d="M572.5 271.5L575 268.2L578.5 267.2L580.2 265.5L582.5 266L584 264.2L586 264.5L586.8 266.8L588.8 268.5L590 272L589.6 276L587.6 278.8L585 279.8L583.4 278.2L582.6 276.2L579.5 275.6L576.5 277L573.6 276.6Z" fill="#fff"/><path d="M585.6 281L587.6 281L586.6 283.2Z" fill="#fff"/></g>
<rect x="567" y="295" width="28" height="51" rx="4" fill="#ff9a86" fill-opacity=".75"/><rect x="570" y="298" width="22" height="45" rx="2.5" fill="#96615c"/>
<path d="M575 309H586M580.5 303.500V314.500" stroke="#d3c0bd" stroke-width="2.2"/><path d="M574.5 332H587.5" stroke="#fff" stroke-width="2.6"/><path d="M570.5 320.5H591.5" stroke="#b07f78" stroke-width="1"/>
<rect x="561.7" y="812" width="106.3" height="28" fill="#fbd6d0"/>
<path d="M567.5 815V839M567.5 826.5H661M618.7 815V826.5M661 826.5V839" stroke="#4a1c16" stroke-width="2" fill="none"/>
<text x="581" y="824" style='font-family:"Liberation Sans", Arial, sans-serif;font-size:9px' fill="#333">10 km</text>
<text x="601" y="835.8" style='font-family:"Liberation Sans", Arial, sans-serif;font-size:9px' fill="#333">10 nmi</text>
<rect x="1196" y="830.5" width="78.5" height="9.5" fill="#fff" fill-opacity=".85"/>
<text x="1198.5" y="837.7" style='font-family:"Liberation Sans", Arial, sans-serif;font-size:9px' fill="#222">38.47°S, 145.45°E</text>
<rect x="1145" y="251.25" width="133" height="181" fill="#e4f2fb" fill-opacity=".95"/><rect x="1145" y="432" width="130" height="59" fill="#e4f2fb" fill-opacity=".95"/>
<rect x="1146" y="251.2" width="96.5" height="31.5" fill="#fbfdfe" fill-opacity=".92"/>
<path d="M1161 251.2L1162.800 255.6" stroke="#111" stroke-width="1.2" fill="none"/><path d="M1161.5 255.300L1165 254.800L1163.800 259.200Z" fill="#b4b8bc"/><path d="M1220.6 251.3C1224 251.600 1226.500 253.600 1231.500 253.400" stroke="#111" stroke-width="1.2" fill="none"/><path d="M1230.500 251.400L1233.600 254.700L1229.400 255.300Z" fill="#b4b8bc"/>
<rect x="1147.3" y="288" width="127" height="202" fill="#fff"/>
<text x="1159.7" y="274.6" style='font-family:"DejaVu Sans", Verdana, sans-serif;font-size:9.8px;font-weight:700' fill="#111">LEGEND</text>
<path d="M1254 260.5L1263.5 270L1254 279.5" stroke="#78828c" stroke-width="2.3" fill="none"/>
<text x="1159.7" y="306.9" style='font-family:"DejaVu Sans", Verdana, sans-serif;font-size:9.8px;font-weight:700' fill="#111">Wind speed</text>
<text x="1158.5" y="324.5" style='font-family:"DejaVu Sans", Verdana, sans-serif;font-size:9.8px;font-weight:700' fill="#111">(knots)</text>
<rect x="1159.3" y="332.6" width="11.8" height="11.8" fill="#a50f0a"/>
<text x="1176.8" y="342.2" style='font-family:"DejaVu Sans", Verdana, sans-serif;font-size:9.8px' fill="#111">45 +</text>
<rect x="1159.3" y="347.9" width="11.8" height="11.8" fill="#e8290f"/>
<text x="1176.8" y="357.5" style='font-family:"DejaVu Sans", Verdana, sans-serif;font-size:9.8px' fill="#111">35 – 45</text>
<rect x="1159.3" y="363.1" width="11.8" height="11.8" fill="#ff7f4a"/>
<text x="1176.8" y="372.7" style='font-family:"DejaVu Sans", Verdana, sans-serif;font-size:9.8px' fill="#111">30 – 35</text>
<rect x="1159.3" y="378.4" width="11.8" height="11.8" fill="#e6e273"/>
<text x="1176.8" y="388.0" style='font-family:"DejaVu Sans", Verdana, sans-serif;font-size:9.8px' fill="#111">25 – 30</text>
<rect x="1159.3" y="393.6" width="11.8" height="11.8" fill="#70d670"/>
<text x="1176.8" y="403.2" style='font-family:"DejaVu Sans", Verdana, sans-serif;font-size:9.8px' fill="#111">20 – 25</text>
<rect x="1159.3" y="408.9" width="11.8" height="11.8" fill="#adf7a1"/>
<text x="1176.8" y="418.5" style='font-family:"DejaVu Sans", Verdana, sans-serif;font-size:9.8px' fill="#111">15 – 20</text>
<rect x="1159.3" y="424.1" width="11.8" height="11.8" fill="#9ed9f7"/>
<text x="1176.8" y="433.7" style='font-family:"DejaVu Sans", Verdana, sans-serif;font-size:9.8px' fill="#111">10 – 15</text>
<rect x="1159.3" y="439.4" width="11.8" height="11.8" fill="#c9ecfb"/>
<text x="1176.8" y="449.0" style='font-family:"DejaVu Sans", Verdana, sans-serif;font-size:9.8px' fill="#111">5 – 10</text>
<rect x="1159.3" y="454.6" width="11.8" height="11.8" fill="#f0f6fd" stroke="#d5dde5" stroke-width="0.8"/>
<text x="1176.8" y="464.2" style='font-family:"DejaVu Sans", Verdana, sans-serif;font-size:9.8px' fill="#111">0 – 5</text>
<rect x="1159.3" y="469.9" width="11.8" height="11.8" fill="#cccccc"/>
<text x="1176.8" y="479.5" style='font-family:"DejaVu Sans", Verdana, sans-serif;font-size:9.8px;font-style:italic' fill="#777">no data</text>
</svg>
<div class="abs" style="left:558px;top:847px;width:720.5px;height:13px;background:#fdf5d6"></div>
<div class="abs" style="left:567.5px;top:857px;width:12.5px;height:4px;border:1px solid #555;border-bottom:0;background:#fff"></div>
<div class="abs" style="left:705.5px;top:857px;width:12.5px;height:4px;border:1px solid #555;border-bottom:0;background:#fff"></div>
<div class="abs" style="left:843.5px;top:857px;width:12.5px;height:4px;border:1px solid #555;border-bottom:0;background:#fff"></div>
<div class="abs" style="left:981.5px;top:857px;width:12.5px;height:4px;border:1px solid #555;border-bottom:0;background:#fff"></div>
<div class="abs" style="left:723.5px;top:855px;width:8.5px;height:8px;border-radius:50%;background:#e05ce0"></div>
<div class="abs" style="left:861.5px;top:855px;width:8.5px;height:8px;border-radius:50%;background:#8a5ce0"></div>
<div class="abs" style="left:999.5px;top:855px;width:8.5px;height:8px;border-radius:50%;background:#d03030"></div>
<div class="abs" id="task"></div><div class="abs" id="search"></div>
<svg style="left:16px;top:872px" width="16" height="16" viewBox="0 0 16 16"><path d="M0 2.3L6.6 1.4V7.6H0Z M7.5 1.3L16 0V7.6H7.5Z M0 8.4H6.6V14.6L0 13.7Z M7.5 8.4H16V16L7.5 14.7Z" fill="#fff"/></svg>
<svg style="left:56px;top:868.5px" width="23" height="23" viewBox="0 0 23 23"><circle cx="11.5" cy="11.5" r="9" fill="none" stroke="#fff" stroke-width="2.6"/></svg>
<div class="tk" style="left:84.5px;top:873.3px;font-size:14.6px;color:#b2b2b2">Ask me anything</div>
<svg style="left:365px;top:870px" width="14" height="20" viewBox="0 0 14 20"><rect x="4.5" y="1" width="5" height="11" rx="2.5" stroke="#a8a8a8" stroke-width="1.1" fill="none"/><path d="M2 9.5V11.5C2 17 12 17 12 11.500V9.500M7 15.800V19M4 19H10" stroke="#a8a8a8" stroke-width="1.1" fill="none"/></svg>
<svg style="left:405.5px;top:873px" width="20.5" height="14" viewBox="0 0 22 16"><rect x="4.5" y="1" width="13" height="14" stroke="#fff" stroke-width="1.4" fill="none"/><path d="M3 3H0.8V13H3M19 3H21.200V13H19" stroke="#fff" stroke-width="1.4" fill="none"/></svg>
<div class="abs" style="left:443px;top:860px;width:48px;height:40px;background:#494949"></div><div class="abs" style="left:443px;top:898px;width:48px;height:2px;background:#7fbdee"></div>
<svg style="left:457px;top:869.5px" width="22" height="22" viewBox="0 0 22 22"><path d="M19.6 12.8H6" stroke="#1f88e5" stroke-width="4.2" fill="none"/><path d="M18.9 12.6C18.9 6.8 15.600 3.300 11.200 3.300C6.400 3.300 3.500 7 3.500 11.300C3.500 15.800 6.600 18.800 11 18.800C13.800 18.800 16 18 18 16.600" stroke="#1f88e5" stroke-width="5" fill="none"/></svg>
<svg style="left:504px;top:869px" width="24" height="22" viewBox="0 0 24 22"><path d="M1 3.500C1 2.500 1.800 2 2.500 2H8.500L10.500 4H21.500C22.300 4 23 4.700 23 5.500V19.500H1Z" fill="#f5c64e"/><path d="M1 7H23V20H1Z" fill="#fbe08a"/><path d="M6 20V14H18V20H15.500V16.500H8.500V20Z" fill="#3d9be0"/></svg>
<svg style="left:553px;top:868px" width="22" height="24" viewBox="0 0 22 24"><path d="M7 7V5A4 4 0 0 1 15 5V7" stroke="#fff" stroke-width="1.4" fill="none"/><path d="M1 7.500L21 6.500V22.500L1 21Z" fill="#fff"/><path d="M6 11.200L10.300 10.900V14H6ZM11.300 10.800L16 10.500V14H11.300ZM6 15H10.300V18.200L6 17.900ZM11.300 15H16V18.600L11.300 18.300Z" fill="#1b1d20"/></svg>
<svg style="left:602px;top:869px" width="24" height="23" viewBox="0 0 24 23"><path d="M6 0.500L12 4.500L6 8.500L0 4.500ZM18 0.500L24 4.500L18 8.500L12 4.500ZM0 12.500L6 8.500L12 12.500L6 16.500ZM24 12.500L18 8.500L12 12.500L18 16.500ZM6 17.800L12 13.800L18 17.800L12 21.800Z" fill="#fff"/></svg>
<svg style="left:651px;top:873px" width="23.500" height="14.500" viewBox="0 0 26 16"><path d="M13 8C10.500 4 8.500 2.200 6.200 2.200A5.800 5.800 0 0 0 6.200 13.800C8.500 13.800 10.500 12 13 8C15.500 4 17.500 2.200 19.800 2.200A5.800 5.800 0 0 1 19.800 13.800C17.500 13.800 15.500 12 13 8Z" fill="none" stroke="#4fb0b0" stroke-width="2.400"/><path d="M13 8C15.500 4 17.500 2.200 19.800 2.200A5.800 5.800 0 0 1 19.800 13.800" fill="none" stroke="#b8d66a" stroke-width="2.400"/></svg>
<div class="abs" style="left:700px;top:868px;width:24px;height:24px;background:#0a84ff"></div><div class="abs" style="left:692px;top:898px;width:39.5px;height:2px;background:#7fbdee"></div>
<svg style="left:704px;top:872px" width="16" height="16" viewBox="0 0 16 16"><path d="M8 1C4 1 1 3.900 1 7.500C1 9.500 2 11.300 3.500 12.500V15.200L6 13.800C6.600 14 7.300 14 8 14C12 14 15 11.100 15 7.500C15 3.900 12 1 8 1Z" fill="#fff"/><path d="M3.800 9.600L7.200 6L9 7.800L12.200 6L8.800 9.600L7 7.800Z" fill="#0a84ff"/></svg>
<div class="abs" style="left:748.7px;top:868px;width:24.300px;height:24px;background:#3b5998"></div><div class="abs" style="left:741px;top:898px;width:39px;height:2px;background:#7fbdee"></div>
<svg style="left:753px;top:872px" width="16" height="16" viewBox="0 0 16 16"><rect x="0" y="0" width="16" height="16" rx="1" fill="#fff"/><path d="M11 16V10H13L13.300 7.600H11V6.100C11 5.400 11.200 5 12.200 5H13.400V2.900C13.200 2.900 12.500 2.800 11.700 2.800C9.900 2.800 8.700 3.900 8.700 5.800V7.600H6.700V10H8.700V16Z" fill="#3b5998"/></svg>
<svg style="left:1314px;top:863px" width="32" height="30" viewBox="0 0 32 30"><circle cx="12" cy="18" r="9.600" fill="#1e9fe0" stroke="#fff" stroke-width="1.800"/><path d="M8.500 15.500C8.500 11.500 15 11.500 15 15.200C15 17.200 12 17.600 12 20" stroke="#fff" stroke-width="2.200" fill="none" stroke-dasharray="3 1.200"/><circle cx="12" cy="23.200" r="1.400" fill="#fff"/><circle cx="22" cy="8.500" r="7" fill="#1e9fe0"/><circle cx="22" cy="4.800" r="1.200" fill="#fff"/><path d="M22 7.300V12.500" stroke="#fff" stroke-width="2"/></svg>
<svg style="left:1350px;top:876px" width="14" height="9" viewBox="0 0 14 9"><path d="M1 8L7 1.500L13 8" stroke="#fff" stroke-width="1.300" fill="none"/></svg>
<svg style="left:1371px;top:874px" width="20" height="13" viewBox="0 0 20 13"><rect x="5.500" y="3.500" width="12.500" height="7.500" stroke="#fff" stroke-width="1.200" fill="none"/><rect x="7" y="5" width="9.500" height="4.500" fill="#fff"/><path d="M18.600 5.500V9" stroke="#fff" stroke-width="1.200"/><path d="M1 3.500H5V7.500H1ZM2 1V3.500M4 1V3.500M3 7.500V10.500H5.500" stroke="#fff" stroke-width="1" fill="none"/></svg>
<svg style="left:1397px;top:872px" width="18" height="17" viewBox="0 0 18 17"><circle cx="14" cy="14" r="1.700" fill="#fff"/><path d="M9.500 14A4.500 4.500 0 0 1 14 9.500M6 14A8 8 0 0 1 14 6M2.500 14A11.500 11.500 0 0 1 14 2.500" stroke="#d0d0d0" stroke-width="1.200" fill="none"/></svg>
<svg style="left:1419px;top:872px" width="20" height="17" viewBox="0 0 20 17"><path d="M1.500 6H4.500L8.500 2.500V14.500L4.500 11H1.500Z" stroke="#fff" stroke-width="1.100" fill="none"/><path d="M11 5.800A4 4 0 0 1 11 11.200M13.300 3.800A7 7 0 0 1 13.300 13.200M15.600 1.800A10 10 0 0 1 15.600 15.200" stroke="#fff" stroke-width="1.100" fill="none"/></svg>
<div class="tk" style="left:1447px;top:866px;font-size:11px">ENG</div>
<div class="tk" style="left:1451.5px;top:883px;font-size:11px">UK</div>
<div class="tk" style="left:1491.5px;top:866px;font-size:11.2px">5:23 PM</div>
<div class="tk" style="left:1485.500px;top:882.5px;font-size:11.8px">9/04/2017</div>
<svg style="left:1558px;top:872px" width="18" height="17" viewBox="0 0 18 17"><path d="M1 1H17V12H11L9 14.500L7 12H1Z" stroke="#fff" stroke-width="1.200" fill="none"/></svg>
<div class="abs" style="left:1595.500px;top:860px;width:1px;height:40px;background:#5a5a5a"></div>
</body></html>
